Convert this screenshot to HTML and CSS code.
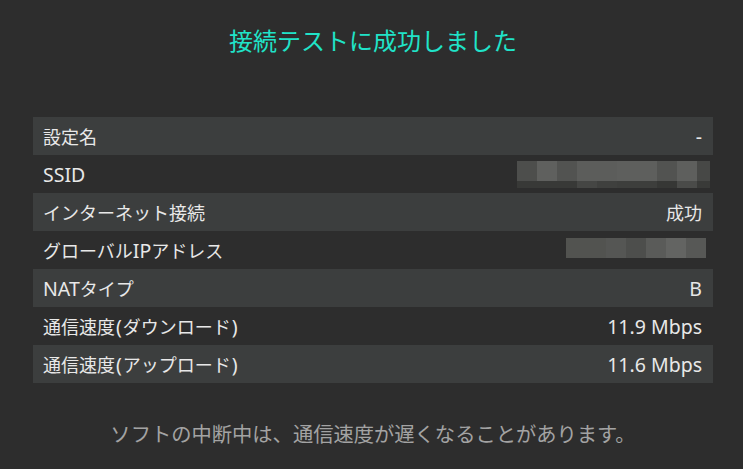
FILE: index.html
```html
<!DOCTYPE html>
<html lang="ja">
<head>
<meta charset="utf-8">
<link rel="stylesheet" href="styles.css">
</head>
<body>
<div class="screen">
  <h1 class="title">接続テストに成功しました</h1>
  <div class="table">
    <div class="row alt"><span class="label">設定名</span><span class="value"><span class="en">-</span></span></div>
    <div class="row"><span class="label"><span class="en">SSID</span></span>
      <svg class="mosaic ssid" width="193" height="27" viewBox="0 0 193 27">
        <rect x="0" y="0" width="20" height="20" fill="#4d4e4c"/>
        <rect x="20" y="0" width="20" height="20" fill="#5f605e"/>
        <rect x="40" y="0" width="20" height="20" fill="#525351"/>
        <rect x="60" y="0" width="20" height="20" fill="#5c5d5b"/>
        <rect x="80" y="0" width="20" height="20" fill="#5c5d5b"/>
        <rect x="100" y="0" width="20" height="20" fill="#5e5f5d"/>
        <rect x="120" y="0" width="20" height="20" fill="#5e5f5d"/>
        <rect x="140" y="0" width="20" height="20" fill="#525351"/>
        <rect x="160" y="0" width="20" height="20" fill="#5e5f5d"/>
        <rect x="180" y="0" width="13" height="20" fill="#474846"/>
        <rect x="0" y="20" width="60" height="7" fill="#383937"/>
        <rect x="60" y="20" width="20" height="7" fill="#454644"/>
        <rect x="80" y="20" width="20" height="7" fill="#3f403e"/>
        <rect x="100" y="20" width="40" height="7" fill="#3d3e3c"/>
        <rect x="140" y="20" width="20" height="7" fill="#363735"/>
        <rect x="160" y="20" width="20" height="7" fill="#4a4b49"/>
        <rect x="180" y="20" width="13" height="7" fill="#393a38"/>
      </svg>
    </div>
    <div class="row alt"><span class="label">インターネット接続</span><span class="value">成功</span></div>
    <div class="row"><span class="label">グローバル<span class="en">IP</span>アドレス</span>
      <svg class="mosaic ip" width="140" height="20" viewBox="0 0 140 20">
        <rect x="0" y="0" width="40" height="20" fill="#525350"/>
        <rect x="40" y="0" width="20" height="20" fill="#555654"/>
        <rect x="60" y="0" width="20" height="20" fill="#4d4e4c"/>
        <rect x="80" y="0" width="20" height="20" fill="#5a5b59"/>
        <rect x="100" y="0" width="20" height="20" fill="#636462"/>
        <rect x="120" y="0" width="20" height="20" fill="#575856"/>
      </svg>
    </div>
    <div class="row alt"><span class="label"><span class="en">NAT</span>タイプ</span><span class="value"><span class="en">B</span></span></div>
    <div class="row"><span class="label">通信速度<span class="en paren">(</span>ダウンロード<span class="en paren">)</span></span><span class="value"><span class="en">11.9 Mbps</span></span></div>
    <div class="row alt"><span class="label">通信速度<span class="en paren">(</span>アップロード<span class="en paren">)</span></span><span class="value"><span class="en">11.6 Mbps</span></span></div>
  </div>
  <p class="note">ソフトの中断中は、通信速度が遅くなることがあります。</p>
</div>
</body>
</html>
```

FILE: styles.css
```css
* { box-sizing: border-box; }
html, body {
  margin: 0;
  padding: 0;
  background: #2d2d2d;
}
body {
  font-family: "Noto Sans CJK JP", "Noto Sans", sans-serif;
  color: #e8e8e8;
  width: 743px;
  height: 469px;
  overflow: hidden;
}
.screen {
  padding: 0 30px 0 33px;
}
.title {
  margin: 0 0 37px 0;
  height: 80px;
  line-height: 80px;
  font-size: 24px;
  font-weight: 400;
  text-align: center;
  color: #20e3c8;
}
.table {
  display: flex;
  flex-direction: column;
}
.row {
  height: 38px;
  display: flex;
  align-items: center;
  justify-content: space-between;
  padding: 0 11px 0 10px;
  font-family: "Noto Sans CJK JP", "Noto Sans", sans-serif;
  font-size: 18px;
}
.row.alt {
  background: #3c3e3e;
}
.label, .value {
  line-height: 38px;
  white-space: nowrap;
}
.en {
  font-family: "Noto Sans", "Noto Sans CJK JP", sans-serif;
  font-size: 19.5px;
}
.paren {
  padding: 0 1px;
}
.mosaic {
  display: block;
}
.mosaic.ssid {
  margin: 6px -8px 0 0;
  align-self: flex-start;
}
.mosaic.ip {
  margin: 7px -4px 0 0;
  align-self: flex-start;
}
.note {
  margin: 32px 0 0 0;
  line-height: 36px;
  font-size: 20.3px;
  text-align: center;
  color: #a3a3a3;
}
```
